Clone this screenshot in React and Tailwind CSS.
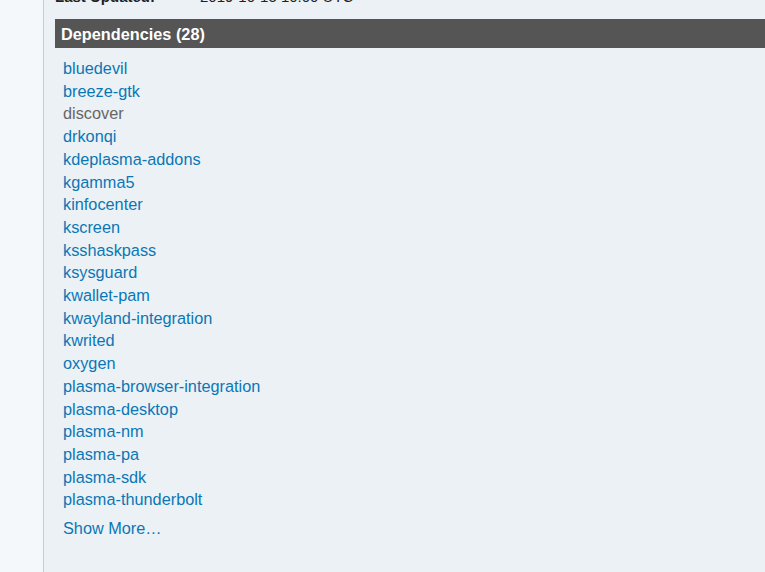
const deps = [
  { name: 'bluedevil' },
  { name: 'breeze-gtk' },
  { name: 'discover', missing: true },
  { name: 'drkonqi' },
  { name: 'kdeplasma-addons' },
  { name: 'kgamma5' },
  { name: 'kinfocenter' },
  { name: 'kscreen' },
  { name: 'ksshaskpass' },
  { name: 'ksysguard' },
  { name: 'kwallet-pam' },
  { name: 'kwayland-integration' },
  { name: 'kwrited' },
  { name: 'oxygen' },
  { name: 'plasma-browser-integration' },
  { name: 'plasma-desktop' },
  { name: 'plasma-nm' },
  { name: 'plasma-pa' },
  { name: 'plasma-sdk' },
  { name: 'plasma-thunderbolt' },
]

export default function App() {
  return (
    <div className="w-[765px] h-[572px] overflow-hidden flex bg-[#f5f8fb] font-['Liberation_Sans',Arial,sans-serif]">
      <div className="w-[44px] shrink-0 border-r border-[#c3ccd8]" />
      <div className="flex-1 bg-[#ecf1f5] pl-[11px] min-w-0">
        {/* last row of details table, scrolled partly out of view */}
        <div className="flex -mt-[13px] h-[20px] items-center text-[15px] text-[#222]">
          <span className="w-[145px] font-bold">Last Updated:</span>
          <span>2019-10-15 10:00 UTC</span>
        </div>

        <div className="mt-[12px] -mr-[20px] bg-[#555555] h-[29px] flex items-center pl-[6px] pt-[1px]">
          <h3 className="text-white font-bold text-[16.3px]">Dependencies (28)</h3>
        </div>

        <ul className="pl-[8px] pt-[9px] text-[16.3px] leading-[22.7px]">
          {deps.map((d) => (
            <li key={d.name}>
              {d.missing ? (
                <span className="text-[#666666]">{d.name}</span>
              ) : (
                <a href="#" className="text-[#0a77b5] no-underline">{d.name}</a>
              )}
            </li>
          ))}
        </ul>
        <a href="#" className="block pl-[8px] mt-[6px] text-[16.3px] leading-[22.7px] text-[#0a77b5]">Show More…</a>
      </div>
    </div>
  )
}
